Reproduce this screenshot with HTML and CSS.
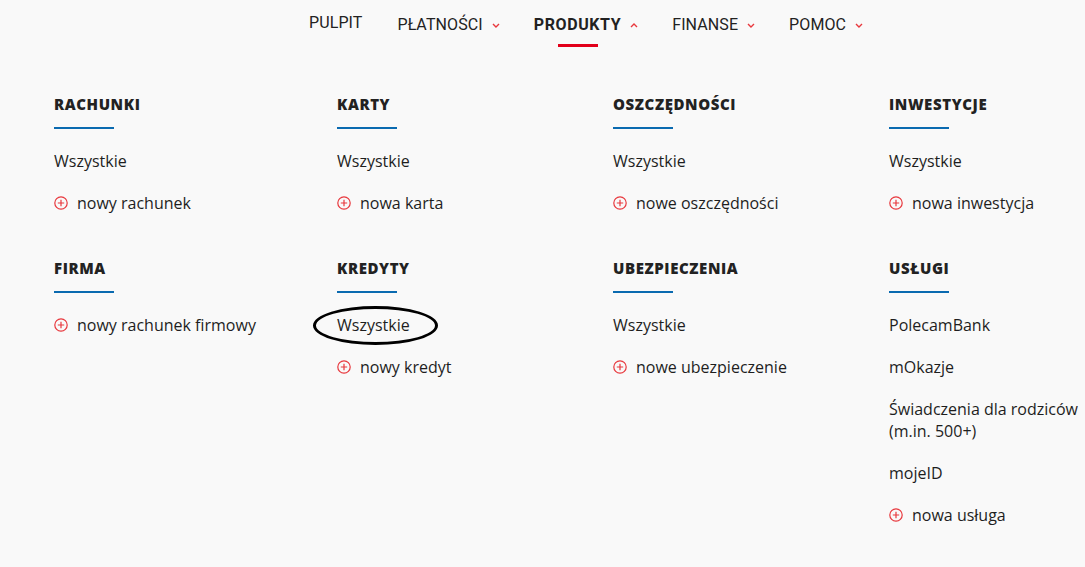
FILE: index.html
```html
<!DOCTYPE html>
<html lang="pl">
<head>
<meta charset="utf-8">
<title>Produkty</title>
<link rel="stylesheet" href="styles.css">
</head>
<body>
<nav class="nav">
  <a class="nav-item nav-plain">PULPIT</a>
  <a class="nav-item">PŁATNOŚCI<svg class="chev" viewBox="0 0 8 5"><path d="M1 1l3 3 3-3"/></svg></a>
  <a class="nav-item nav-active">PRODUKTY<svg class="chev" viewBox="0 0 8 5"><path d="M1 4l3-3 3 3"/></svg></a>
  <a class="nav-item">FINANSE<svg class="chev" viewBox="0 0 8 5"><path d="M1 1l3 3 3-3"/></svg></a>
  <a class="nav-item">POMOC<svg class="chev" viewBox="0 0 8 5"><path d="M1 1l3 3 3-3"/></svg></a>
</nav>

<main class="menu">
  <section class="sec">
    <h2 class="sec-title">RACHUNKI</h2>
    <ul class="list">
      <li>Wszystkie</li>
      <li class="add"><svg class="plus" viewBox="0 0 14 14"><circle cx="7" cy="7" r="6.2"/><path d="M7 3.8v6.4M3.8 7h6.4"/></svg>nowy rachunek</li>
    </ul>
  </section>
  <section class="sec">
    <h2 class="sec-title">KARTY</h2>
    <ul class="list">
      <li>Wszystkie</li>
      <li class="add"><svg class="plus" viewBox="0 0 14 14"><circle cx="7" cy="7" r="6.2"/><path d="M7 3.8v6.4M3.8 7h6.4"/></svg>nowa karta</li>
    </ul>
  </section>
  <section class="sec">
    <h2 class="sec-title">OSZCZĘDNOŚCI</h2>
    <ul class="list">
      <li>Wszystkie</li>
      <li class="add"><svg class="plus" viewBox="0 0 14 14"><circle cx="7" cy="7" r="6.2"/><path d="M7 3.8v6.4M3.8 7h6.4"/></svg>nowe oszczędności</li>
    </ul>
  </section>
  <section class="sec">
    <h2 class="sec-title">INWESTYCJE</h2>
    <ul class="list">
      <li>Wszystkie</li>
      <li class="add"><svg class="plus" viewBox="0 0 14 14"><circle cx="7" cy="7" r="6.2"/><path d="M7 3.8v6.4M3.8 7h6.4"/></svg>nowa inwestycja</li>
    </ul>
  </section>

  <section class="sec">
    <h2 class="sec-title">FIRMA</h2>
    <ul class="list">
      <li class="add"><svg class="plus" viewBox="0 0 14 14"><circle cx="7" cy="7" r="6.2"/><path d="M7 3.8v6.4M3.8 7h6.4"/></svg>nowy rachunek firmowy</li>
    </ul>
  </section>
  <section class="sec">
    <h2 class="sec-title">KREDYTY</h2>
    <ul class="list">
      <li class="marked">Wszystkie<span class="ring"></span></li>
      <li class="add"><svg class="plus" viewBox="0 0 14 14"><circle cx="7" cy="7" r="6.2"/><path d="M7 3.8v6.4M3.8 7h6.4"/></svg>nowy kredyt</li>
    </ul>
  </section>
  <section class="sec">
    <h2 class="sec-title">UBEZPIECZENIA</h2>
    <ul class="list">
      <li>Wszystkie</li>
      <li class="add"><svg class="plus" viewBox="0 0 14 14"><circle cx="7" cy="7" r="6.2"/><path d="M7 3.8v6.4M3.8 7h6.4"/></svg>nowe ubezpieczenie</li>
    </ul>
  </section>
  <section class="sec">
    <h2 class="sec-title">USŁUGI</h2>
    <ul class="list">
      <li>PolecamBank</li>
      <li>mOkazje</li>
      <li>Świadczenia dla rodziców (m.in. 500+)</li>
      <li>mojeID</li>
      <li class="add"><svg class="plus" viewBox="0 0 14 14"><circle cx="7" cy="7" r="6.2"/><path d="M7 3.8v6.4M3.8 7h6.4"/></svg>nowa usługa</li>
    </ul>
  </section>
</main>
</body>
</html>
```

FILE: styles.css
```css
* { box-sizing: border-box; }

html, body {
  margin: 0;
  background: #f9f9f9;
  color: #1e1e1e;
  font-family: "Open Sans", "Liberation Sans", sans-serif;
}

.nav {
  display: flex;
  align-items: flex-start;
  gap: 34px;
  padding: 15px 0 0 309px;
  height: 94px;
  font-family: Roboto, "Liberation Sans", sans-serif;
  font-size: 16px;
  line-height: 20px;
  color: #222;
}

.nav-item {
  position: relative;
  display: flex;
  align-items: center;
  height: 20px;
  letter-spacing: 0.1px;
}

.nav-plain { margin-top: -2px; margin-right: 1px; }

.nav-active {
  font-weight: 700;
  letter-spacing: 0.6px;
}

.nav-active::after {
  content: "";
  position: absolute;
  left: 24px;
  top: 29px;
  width: 40px;
  height: 3px;
  background: #e2001a;
}

.chev {
  width: 8px;
  height: 5px;
  margin-left: 9px;
  fill: none;
  stroke: #e8383d;
  stroke-width: 1.4;
}

.menu {
  display: grid;
  grid-template-columns: 283px 276px 276px 1fr;
  row-gap: 44px;
  padding-left: 54px;
}

.sec-title {
  margin: 0;
  font-size: 15px;
  line-height: 20px;
  font-weight: 800;
  letter-spacing: 0.6px;
  color: #222;
}

.sec-title::after {
  content: "";
  display: block;
  width: 60px;
  height: 2px;
  margin-top: 13px;
  background: #0a6ab0;
}

.list {
  list-style: none;
  margin: 21px 0 0;
  padding: 0;
  display: flex;
  flex-direction: column;
  gap: 20px;
  font-size: 16px;
  line-height: 22px;
}

.list li {
  display: flex;
  align-items: center;
}

.plus {
  width: 14px;
  height: 14px;
  margin-right: 9px;
  flex: none;
  fill: none;
  stroke: #e8383d;
  stroke-width: 1.2;
}

.marked { position: relative; align-self: flex-start; }

.ring {
  position: absolute;
  left: -24px;
  top: -8px;
  width: 125px;
  height: 39px;
  border: 3.5px solid #000;
  border-radius: 50%;
}
```
